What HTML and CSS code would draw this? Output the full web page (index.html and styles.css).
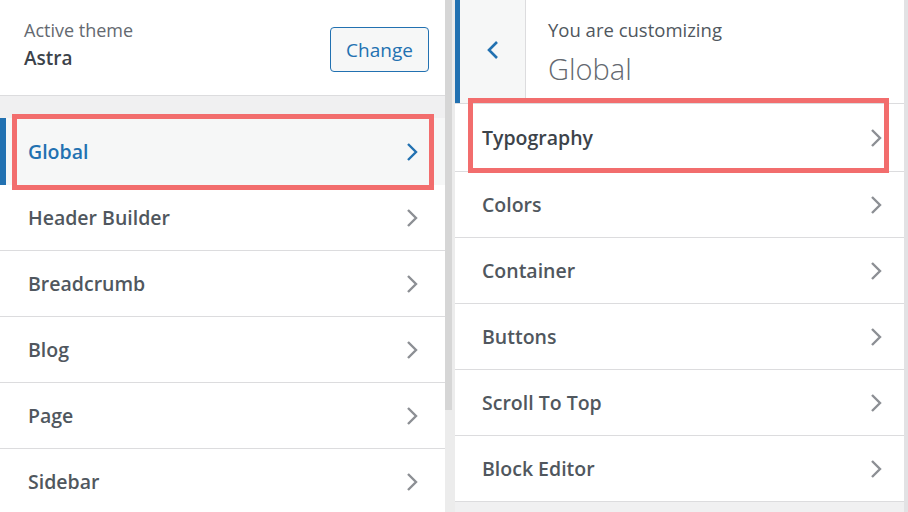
FILE: index.html
```html
<!DOCTYPE html>
<html lang="en">
<head>
  <meta charset="UTF-8" />
  <title>Customizer - Global</title>
  <link rel="stylesheet" href="styles.css">
</head>
<body>
  <div class="screen">

    <!-- Panel principal -->
    <section class="panel panel-main">
      <div class="theme-info">
        <div>
          <div class="theme-label">Active theme</div>
          <div class="theme-name">Astra</div>
        </div>
        <button class="btn-change">Change</button>
      </div>

      <ul class="menu menu-main">
        <li class="item current">Global <svg class="chev" viewBox="0 0 12 20"><polyline points="2,2 10,10 2,18" /></svg></li>
        <li class="item">Header Builder <svg class="chev" viewBox="0 0 12 20"><polyline points="2,2 10,10 2,18" /></svg></li>
        <li class="item">Breadcrumb <svg class="chev" viewBox="0 0 12 20"><polyline points="2,2 10,10 2,18" /></svg></li>
        <li class="item">Blog <svg class="chev" viewBox="0 0 12 20"><polyline points="2,2 10,10 2,18" /></svg></li>
        <li class="item">Page <svg class="chev" viewBox="0 0 12 20"><polyline points="2,2 10,10 2,18" /></svg></li>
        <li class="item">Sidebar <svg class="chev" viewBox="0 0 12 20"><polyline points="2,2 10,10 2,18" /></svg></li>
      </ul>

      <div class="mark mark-global"></div>
    </section>

    <div class="scrollbar"><div class="thumb"></div></div>

    <!-- Sub panel Global -->
    <section class="panel panel-sub">
      <div class="sub-head">
        <div class="back">
          <svg class="back-chev" viewBox="0 0 12 20"><polyline points="10,2 2,10 10,18" /></svg>
        </div>
        <div class="sub-title">
          <div class="sub-label">You are customizing</div>
          <div class="sub-name">Global</div>
        </div>
      </div>

      <ul class="menu menu-sub">
        <li class="item">Typography <svg class="chev" viewBox="0 0 12 20"><polyline points="2,2 10,10 2,18" /></svg></li>
        <li class="item">Colors <svg class="chev" viewBox="0 0 12 20"><polyline points="2,2 10,10 2,18" /></svg></li>
        <li class="item">Container <svg class="chev" viewBox="0 0 12 20"><polyline points="2,2 10,10 2,18" /></svg></li>
        <li class="item">Buttons <svg class="chev" viewBox="0 0 12 20"><polyline points="2,2 10,10 2,18" /></svg></li>
        <li class="item">Scroll To Top <svg class="chev" viewBox="0 0 12 20"><polyline points="2,2 10,10 2,18" /></svg></li>
        <li class="item">Block Editor <svg class="chev" viewBox="0 0 12 20"><polyline points="2,2 10,10 2,18" /></svg></li>
      </ul>

      <div class="mark mark-typo"></div>
    </section>

  </div>
</body>
</html>
```

FILE: styles.css
```css
/* Customizer */
body {
  margin: 0;
  padding: 0;
  background-color: #ffffff;
  font-family: "Open Sans", "Noto Sans", sans-serif;
  color: #50575e;
}

.screen {
  display: flex;
  width: 908px;
  height: 512px;
  overflow: hidden;
}

.panel {
  position: relative;
  background-color: #f0f0f1;
}

.panel-main {
  width: 445px;
}

.panel-sub {
  width: 449px;
  border-right: 4px solid #e2e2e4;
}

.menu {
  list-style: none;
  margin: 0;
  padding: 0;
}

.item {
  display: flex;
  align-items: center;
  justify-content: space-between;
  height: 65px;
  background-color: #ffffff;
  border-bottom: 1px solid #dcdcde;
  font-size: 19.5px;
  font-weight: 600;
  color: #50575e;
}

.chev {
  width: 12px;
  height: 20px;
  fill: none;
  stroke: #8c8f94;
  stroke-width: 2.4;
}

/* panel principal */
.theme-info {
  display: flex;
  justify-content: space-between;
  align-items: flex-start;
  height: 95px;
  padding: 0 16px 0 24px;
  background-color: #ffffff;
  border-bottom: 1px solid #dcdcde;
}

.theme-label {
  margin-top: 18px;
  font-size: 18px;
  color: #646970;
}

.theme-name {
  margin-top: 3px;
  font-size: 19px;
  font-weight: 600;
  color: #3c434a;
}

.btn-change {
  margin-top: 27px;
  width: 99px;
  height: 45px;
  background-color: #f6f7f7;
  border: 1px solid #2271b1;
  border-radius: 4px;
  color: #2271b1;
  font-family: inherit;
  font-size: 19px;
}

.menu-main {
  padding-top: 22px;
}

.menu-main .item {
  padding: 0 27px 0 28px;
}

.menu-main .item:first-child {
  height: 67px;
  border-bottom: none;
}

.item.current {
  background-color: #f6f7f7;
  border-left: 6px solid #2271b1;
  padding-left: 22px;
  color: #2271b1;
}

.item.current .chev {
  stroke: #2271b1;
}

/* scrollbar */
.scrollbar {
  width: 10px;
  background-color: #ececec;
}

.thumb {
  width: 7px;
  height: 410px;
  background-color: #d6d6d6;
}

/* sub panel */
.sub-head {
  display: flex;
  height: 103px;
  background-color: #ffffff;
  border-bottom: 1px solid #dcdcde;
}

.back {
  width: 65px;
  border-left: 5px solid #2271b1;
  border-right: 1px solid #dcdcde;
  background-color: #f6f7f7;
  display: flex;
  align-items: center;
  justify-content: center;
}

.back-chev {
  width: 12px;
  height: 20px;
  margin-top: -4px;
  fill: none;
  stroke: #2271b1;
  stroke-width: 2.6;
}

.sub-title {
  padding-left: 22px;
}

.sub-label {
  margin-top: 17px;
  font-size: 18.5px;
  color: #50575e;
}

.sub-name {
  margin-top: 7px;
  font-size: 29px;
  font-weight: 300;
  color: #646970;
}

.menu-sub .item {
  padding: 0 22px 0 27px;
}

.menu-sub .item:first-child {
  height: 67px;
  color: #3c434a;
}

/* marcos rojos */
.mark {
  position: absolute;
  border: 5px solid #f26d6d;
  box-sizing: border-box;
}

.mark-global {
  left: 12px;
  top: 114px;
  width: 422px;
  height: 76px;
}

.mark-typo {
  left: 13px;
  top: 98px;
  width: 421px;
  height: 75px;
}
```
